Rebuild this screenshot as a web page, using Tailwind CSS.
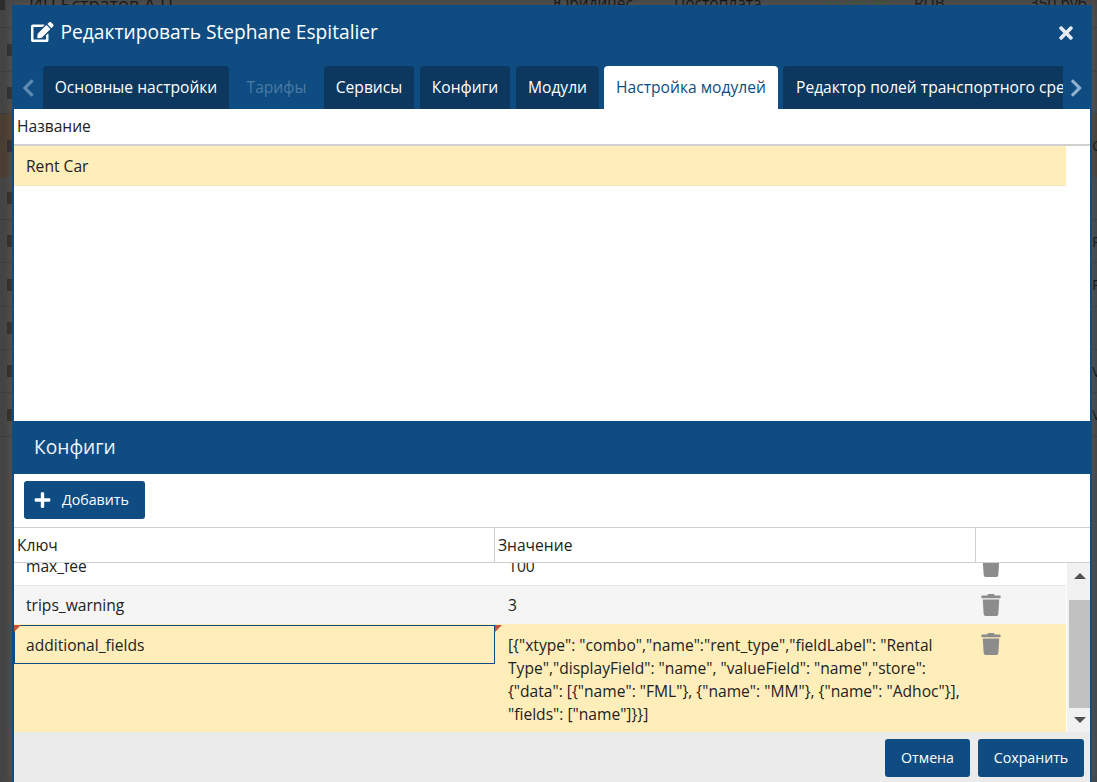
<!DOCTYPE html>
<html lang="ru">
<head>
  <meta charset="UTF-8" />
  <title>Редактировать Stephane Espitalier</title>
  <script src="https://cdn.jsdelivr.net/npm/@tailwindcss/browser@4"></script>
</head>
<body class="relative h-[782px] w-[1097px] overflow-hidden bg-[#444444] font-['Open_Sans',sans-serif] text-[15.6px] text-[#222222]">

  <!-- masked page behind the window -->
  <div class="-mt-[17px] flex flex-col text-[#111111]">
    <div class="grid h-[45px] grid-cols-[7px_546px_121px_149px_91px_1fr] items-center border-b border-[#3c3c3c] pb-[2px] text-[15.5px] whitespace-nowrap">
      <i class="h-[12px] w-[5px] bg-[#2c2c2c]"></i><span class="pl-[22px] text-[18px]">ИП Бстратов А.П</span><span>Юридичес</span><span>Постоплата</span><span class="text-[#34502c]">33235.86</span><span class="flex gap-[85px]"><span>RUB</span><span>350 руб</span></span>
    </div>
    <div class="flex h-[44px] items-center border-b border-[#3c3c3c] pl-[7px]"><i class="h-[12px] w-[5px] bg-[#2c2c2c]"></i></div>
    <div class="flex h-[42px] items-center border-b border-[#3c3c3c] pl-[7px]"><i class="h-[12px] w-[5px] bg-[#2c2c2c]"></i></div>
    <div class="flex h-[63px] items-center justify-between bg-[#4a3e32] pl-[7px] text-[15px]"><i class="h-[12px] w-[5px] bg-[#2c2c2c]"></i><span class="w-[5px] overflow-hidden">О</span></div>
    <div class="flex h-[43px] items-center justify-between border-b border-[#3c3c3c] pl-[7px] text-[15px]"><i class="h-[12px] w-[5px] bg-[#2c2c2c]"></i></div>
    <div class="flex h-[43px] items-center justify-between border-b border-[#3c3c3c] pl-[7px] text-[15px]"><i class="h-[12px] w-[5px] bg-[#2c2c2c]"></i><span class="w-[5px] overflow-hidden">Р</span></div>
    <div class="flex h-[44px] items-center justify-between border-b border-[#3c3c3c] pl-[7px] text-[15px]"><i class="h-[12px] w-[5px] bg-[#2c2c2c]"></i><span class="w-[5px] overflow-hidden">Р</span></div>
    <div class="flex h-[43px] items-center justify-between border-b border-[#3c3c3c] pl-[7px] text-[15px]"><i class="h-[12px] w-[5px] bg-[#2c2c2c]"></i></div>
    <div class="flex h-[43px] items-center justify-between border-b border-[#3c3c3c] pl-[7px] text-[15px]"><i class="h-[12px] w-[5px] bg-[#2c2c2c]"></i><span class="w-[5px] overflow-hidden">V</span></div>
    <div class="flex h-[44px] items-center justify-between border-b border-[#3c3c3c] pl-[7px] text-[15px]"><i class="h-[12px] w-[5px] bg-[#2c2c2c]"></i><span class="w-[5px] overflow-hidden">V</span></div>
  </div>

  <!-- edit window -->
  <div class="absolute top-[5px] left-[12px] flex h-[777px] w-[1080px] flex-col bg-[#0f4c81] pr-[2px] pl-[2px] shadow-[0_0_10px_rgba(255,255,255,0.12)]">

    <div class="flex h-[61px] shrink-0 items-center justify-between pr-[16px] pb-[6px] pl-[17px] text-white">
      <div class="flex items-center gap-[7px]">
        <svg class="h-[20px] w-[22.5px] fill-white" viewBox="0 0 576 512"><path d="M402.6 83.2l90.2 90.2c3.8 3.8 3.8 10 0 13.8L274.4 405.6l-92.8 10.3c-12.4 1.4-22.9-9.1-21.5-21.5l10.3-92.8L388.8 83.2c3.8-3.8 10-3.8 13.8 0zm162-22.9l-48.8-48.8c-15.2-15.2-39.9-15.2-55.2 0l-35.4 35.4c-3.8 3.8-3.8 10 0 13.8l90.2 90.2c3.8 3.8 10 3.8 13.8 0l35.4-35.4c15.2-15.3 15.2-40 0-55.2zM384 346.2V448H64V128h229.8c3.2 0 6.2-1.3 8.5-3.5l40-40c7.6-7.6 2.2-20.5-8.5-20.5H48C21.5 64 0 85.5 0 112v352c0 26.5 21.5 48 48 48h352c26.5 0 48-21.5 48-48V306.2c0-10.7-12.9-16-20.5-8.5l-40 40c-2.2 2.3-3.5 5.3-3.5 8.5z"/></svg>
        <span class="text-[19.2px] whitespace-nowrap">Редактировать Stephane Espitalier</span>
      </div>
      <svg class="mr-px h-[20px] w-[14px] fill-[#e4ebf2]" viewBox="0 0 352 512"><path d="M242.72 256l100.07-100.07c12.28-12.28 12.28-32.19 0-44.48l-22.24-22.24c-12.28-12.28-32.19-12.28-44.48 0L176 189.28 75.93 89.21c-12.28-12.28-32.19-12.28-44.48 0L9.21 111.45c-12.28 12.28-12.28 32.19 0 44.48L109.28 256 9.21 356.07c-12.28 12.28-12.28 32.19 0 44.48l22.24 22.24c12.28 12.28 32.2 12.28 44.48 0L176 322.72l100.07 100.07c12.28 12.28 32.2 12.28 44.48 0l22.24-22.24c12.28-12.28 12.28-32.19 0-44.48L242.72 256z"/></svg>
    </div>

    <div class="flex h-[43px] shrink-0 items-center">
      <svg class="ml-[8px] h-[20px] w-[12.5px] shrink-0 fill-[#5f8bb2]" viewBox="0 0 320 512"><path d="M34.52 239.03L228.87 44.69c9.37-9.37 24.57-9.37 33.94 0l22.67 22.67c9.36 9.36 9.37 24.52.04 33.9L131.49 256l154.02 154.75c9.34 9.38 9.32 24.54-.04 33.9l-22.67 22.67c-9.37 9.37-24.57 9.37-33.94 0L34.52 272.97c-9.37-9.37-9.37-24.57 0-33.94z"/></svg>
      <div class="ml-[8.5px] flex h-full w-[1020px] gap-[6px] overflow-hidden text-[15.6px] whitespace-nowrap text-white">
        <div class="flex w-[186px] shrink-0 items-center justify-center rounded-t-[4px] bg-[#0c3860]">Основные настройки</div>
        <div class="flex w-[83px] shrink-0 items-center justify-center text-[#4b7aa3]">Тарифы</div>
        <div class="flex w-[90px] shrink-0 items-center justify-center rounded-t-[4px] bg-[#0c3860]">Сервисы</div>
        <div class="flex w-[90px] shrink-0 items-center justify-center rounded-t-[4px] bg-[#0c3860]">Конфиги</div>
        <div class="flex w-[83px] shrink-0 items-center justify-center rounded-t-[4px] bg-[#0c3860]">Модули</div>
        <div class="-ml-px flex w-[174px] shrink-0 items-center justify-center rounded-t-[4px] bg-white text-[#0f4c81]">Настройка модулей</div>
        <div class="-ml-px flex w-[280px] shrink-0 items-center overflow-hidden rounded-tl-[4px] bg-[#0c3860] pl-[13px]">Редактор полей транспортного средства</div>
      </div>
      <svg class="ml-[7px] h-[20px] w-[12.5px] shrink-0 fill-[#8fb0cc]" viewBox="0 0 320 512"><path d="M285.476 272.971L91.132 467.314c-9.373 9.373-24.569 9.373-33.941 0l-22.667-22.667c-9.357-9.357-9.375-24.522-.04-33.901L188.505 256 34.484 101.255c-9.335-9.379-9.317-24.544.04-33.901l22.667-22.667c9.373-9.373 24.569-9.373 33.941 0L285.475 239.03c9.373 9.372 9.373 24.568.001 33.941z"/></svg>
    </div>

    <!-- modules grid -->
    <div class="flex h-[312px] shrink-0 flex-col bg-white">
      <div class="flex h-[37px] shrink-0 items-center border-b-2 border-[#d0d0d0] pl-[3px]">Название</div>
      <div class="flex h-[40px] w-[1052px] shrink-0 items-center border-b border-[#f3e6b8] bg-[#ffeeba] pt-[2px] pl-[12px]">Rent Car</div>
    </div>

    <div class="flex h-[53px] shrink-0 items-center pl-[20px] text-[19.2px] text-[#eef3f8]">Конфиги</div>

    <div class="flex h-[53px] shrink-0 items-start bg-white pt-[7px] pl-[10px]">
      <button class="flex h-[38px] w-[121px] items-center gap-[11px] rounded-[3px] bg-[#0f4c81] pl-[10px] text-[14.2px] text-white">
        <svg class="h-[18px] w-[17px] fill-white" viewBox="0 0 448 512"><path d="M416 208H272V64c0-17.67-14.33-32-32-32h-32c-17.67 0-32 14.33-32 32v144H32c-17.67 0-32 14.33-32 32v32c0 17.67 14.33 32 32 32h144v144c0 17.67 14.33 32 32 32h32c17.67 0 32-14.33 32-32V304h144c17.67 0 32-14.33 32-32v-32c0-17.67-14.33-32-32-32z"/></svg>
        Добавить
      </button>
    </div>

    <!-- config grid -->
    <div class="grid h-[36px] shrink-0 grid-cols-[481px_481px_1fr] border-y border-[#d0d0d0] bg-white">
      <div class="flex items-center border-r border-[#d0d0d0] pt-[1px] pl-[3px]">Ключ</div>
      <div class="flex items-center border-r border-[#d0d0d0] pt-[1px] pl-[3px]">Значение</div>
      <div></div>
    </div>

    <div class="flex h-[169px] shrink-0 bg-white">
      <div class="flex w-[1052px] shrink-0 flex-col justify-end overflow-hidden">
        <div class="grid h-[40px] shrink-0 grid-cols-[481px_481px_1fr] items-center border-b border-[#e6e6e6]">
          <div class="pt-[2px] pl-[12px]">max_fee</div>
          <div class="pt-[2px] pl-[13px]">100</div>
          <svg class="ml-[5px] h-[22px] w-[20px] fill-[#8c8c8c]" viewBox="0 0 448 512"><path d="M432 32H312l-9.4-18.7A24 24 0 0 0 281.1 0H166.8a23.72 23.72 0 0 0-21.4 13.3L136 32H16A16 16 0 0 0 0 48v32a16 16 0 0 0 16 16h416a16 16 0 0 0 16-16V48a16 16 0 0 0-16-16zM53.2 467a48 48 0 0 0 47.9 45h245.8a48 48 0 0 0 47.9-45L416 128H32z"/></svg>
        </div>
        <div class="grid h-[38px] shrink-0 grid-cols-[481px_481px_1fr] items-center bg-[#f5f5f5]">
          <div class="pt-[2px] pl-[12px]">trips_warning</div>
          <div class="pt-[2px] pl-[13px]">3</div>
          <svg class="mb-[1px] ml-[5px] h-[22px] w-[20px] fill-[#8c8c8c]" viewBox="0 0 448 512"><path d="M432 32H312l-9.4-18.7A24 24 0 0 0 281.1 0H166.8a23.72 23.72 0 0 0-21.4 13.3L136 32H16A16 16 0 0 0 0 48v32a16 16 0 0 0 16 16h416a16 16 0 0 0 16-16V48a16 16 0 0 0-16-16zM53.2 467a48 48 0 0 0 47.9 45h245.8a48 48 0 0 0 47.9-45L416 128H32z"/></svg>
        </div>
        <div class="grid h-[108px] shrink-0 grid-cols-[481px_481px_1fr] items-start bg-[#ffeeba] pt-[1px]">
          <div class="relative flex h-[39px] items-center border border-[#0f4c81] pt-[2px] pl-[11px]">
            additional_fields
            <i class="absolute -top-px -left-px border-t-[7px] border-r-[7px] border-t-[#c9513c] border-r-transparent"></i>
          </div>
          <div class="relative px-[13px] pt-[9px] leading-[23px]">
            [{"xtype": "combo","name":"rent_type","fieldLabel": "Rental Type","displayField": "name", "valueField": "name","store": {"data": [{"name": "FML"}, {"name": "MM"}, {"name": "Adhoc"}], "fields": ["name"]}}]
            <i class="absolute top-0 left-0 border-t-[7px] border-r-[7px] border-t-[#c9513c] border-r-transparent"></i>
          </div>
          <svg class="mt-[8px] ml-[5px] h-[22px] w-[20px] fill-[#8c8c8c]" viewBox="0 0 448 512"><path d="M432 32H312l-9.4-18.7A24 24 0 0 0 281.1 0H166.8a23.72 23.72 0 0 0-21.4 13.3L136 32H16A16 16 0 0 0 0 48v32a16 16 0 0 0 16 16h416a16 16 0 0 0 16-16V48a16 16 0 0 0-16-16zM53.2 467a48 48 0 0 0 47.9 45h245.8a48 48 0 0 0 47.9-45L416 128H32z"/></svg>
        </div>
      </div>
      <!-- scrollbar -->
      <div class="ml-px flex w-[23px] flex-col bg-[#f1f1f1] pl-[2px]">
        <div class="flex h-[37px] items-start justify-center pt-[10px]"><i class="border-x-[6px] border-b-[6px] border-x-transparent border-b-[#505050]"></i></div>
        <div class="h-[108px] bg-[#c1c1c1]"></div>
        <div class="flex flex-1 items-center justify-center"><i class="border-x-[6px] border-t-[6px] border-x-transparent border-t-[#505050]"></i></div>
      </div>
    </div>

    <div class="flex flex-1 items-start justify-end gap-[8px] bg-[#ebebeb] pt-[7px] pr-[6px] text-[14.2px] text-white">
      <button class="h-[38px] w-[85px] rounded-[3px] bg-[#0f4c81]">Отмена</button>
      <button class="h-[38px] w-[106px] rounded-[3px] bg-[#0f4c81]">Сохранить</button>
    </div>
  </div>
</body>
</html>
